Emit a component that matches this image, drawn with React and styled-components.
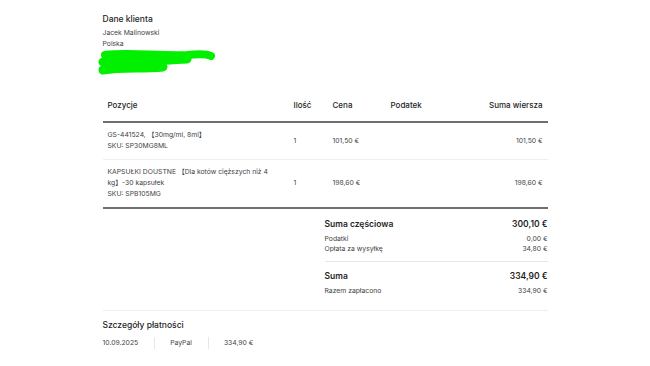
import styled, { createGlobalStyle } from "styled-components";

const Global = createGlobalStyle`
  body {
    margin: 0;
    background: #fff;
    font-family: Inter, "Noto Sans", "Noto Sans CJK SC", sans-serif;
    color: #333;
  }
`;

const Page = styled.div`
  width: 445px;
  margin: 0 auto;
  padding-top: 13px;
`;

const Title = styled.div`
  font-size: 8.5px;
  line-height: 12px;
  font-weight: 500;
  color: #1e1e1e;
  margin-bottom: ${(p) => p.gap || 3}px;
`;

const Line = styled.div`
  font-size: 6.8px;
  line-height: 11px;
  color: #444;
`;

const Scribble = styled.svg`
  display: block;
  margin-left: -6px;
  width: 120px;
  height: 28px;
`;

const Table = styled.div`
  margin-top: 14px;
`;

const Row = styled.div`
  display: grid;
  grid-template-columns: 186px 39px 58px 1fr 1fr;
  align-items: center;
  border-bottom: ${(p) => p.border};
`;

const Cell = styled.div`
  padding: ${(p) => (p.head ? "9px 5px 10px" : "6px 5px 8px")};
  font-size: ${(p) => (p.head ? "8px" : "6.8px")};
  line-height: 11px;
  font-weight: ${(p) => (p.head ? 500 : 400)};
  color: ${(p) => (p.head ? "#1e1e1e" : "#444")};
  text-align: ${(p) => (p.right ? "right" : "left")};
`;

const Totals = styled.div`
  margin-left: 222px;
  padding-top: 9px;
  padding-bottom: 14px;
`;

const TotalGroup = styled.div`
  padding-bottom: ${(p) => (p.first ? 7 : 0)}px;
  border-bottom: ${(p) => (p.first ? "1px solid #dfe7ef" : "none")};
  margin-bottom: ${(p) => (p.first ? 8 : 0)}px;
`;

const TotalRow = styled.div`
  display: flex;
  justify-content: space-between;
  font-size: ${(p) => (p.strong ? "8.5px" : "6.8px")};
  line-height: ${(p) => (p.strong ? "13px" : "10px")};
  font-weight: ${(p) => (p.strong ? 600 : 400)};
  color: ${(p) => (p.strong ? "#1e1e1e" : "#444")};
  margin-bottom: ${(p) => (p.strong ? 3 : 0)}px;
`;

const Payment = styled.div`
  border-top: 1px solid #eceff1;
  padding-top: 8px;
`;

const PayRow = styled.div`
  display: flex;
  align-items: center;
  margin-top: 6px;
`;

const PayItem = styled.div`
  font-size: 6.8px;
  line-height: 12px;
  color: #444;
  padding: 0 ${(p) => (p.last ? 0 : 16)}px 0 ${(p) => (p.first ? 0 : 15)}px;
  border-right: ${(p) => (p.last ? "none" : "1px solid #e4e7ea")};
`;

const items = [
  {
    name: ["GS-441524, 【30mg/ml, 8ml】", "SKU: SP30MG8ML"],
    qty: 1,
    price: "101,50 €",
    total: "101,50 €",
  },
  {
    name: [
      "KAPSUŁKI DOUSTNE 【Dla kotów cięższych niż 4 kg】-30 kapsułek",
      "SKU: SPB105MG",
    ],
    qty: 1,
    price: "198,60 €",
    total: "198,60 €",
  },
];

export default function App() {
  return (
    <>
      <Global />
      <Page>
        <Title gap={2}>Dane klienta</Title>
        <Line>Jacek Malinowski</Line>
        <Line>Polska</Line>
        <Scribble viewBox="0 0 120 28">
          <path
            d="M8 6 C30 3 60 7 90 6 C100 5 110 5 114 7"
            stroke="#00f000"
            strokeWidth="8"
            strokeLinecap="round"
            fill="none"
          />
          <path
            d="M6 13 C30 12 60 12 90 10 M6 21 C25 18 45 20 66 18"
            stroke="#00f000"
            strokeWidth="9"
            strokeLinecap="round"
            fill="none"
          />
        </Scribble>

        <Table>
          <Row border="2px solid #6f6f6f">
            <Cell head>Pozycje</Cell>
            <Cell head>Ilość</Cell>
            <Cell head>Cena</Cell>
            <Cell head>Podatek</Cell>
            <Cell head right>
              Suma wiersza
            </Cell>
          </Row>
          {items.map((it, i) => (
            <Row
              key={i}
              border={
                i === items.length - 1 ? "2px solid #6f6f6f" : "1px solid #eeeff0"
              }
            >
              <Cell>
                {it.name.map((n) => (
                  <div key={n}>{n}</div>
                ))}
              </Cell>
              <Cell>{it.qty}</Cell>
              <Cell>{it.price}</Cell>
              <Cell />
              <Cell right>{it.total}</Cell>
            </Row>
          ))}
        </Table>

        <Totals>
          <TotalGroup first>
            <TotalRow strong>
              <span>Suma częściowa</span>
              <span>300,10 €</span>
            </TotalRow>
            <TotalRow>
              <span>Podatki</span>
              <span>0,00 €</span>
            </TotalRow>
            <TotalRow>
              <span>Opłata za wysyłkę</span>
              <span>34,80 €</span>
            </TotalRow>
          </TotalGroup>
          <TotalGroup>
            <TotalRow strong>
              <span>Suma</span>
              <span>334,90 €</span>
            </TotalRow>
            <TotalRow>
              <span>Razem zapłacono</span>
              <span>334,90 €</span>
            </TotalRow>
          </TotalGroup>
        </Totals>

        <Payment>
          <Title gap={0}>Szczegóły płatności</Title>
          <PayRow>
            <PayItem first>10.09.2025</PayItem>
            <PayItem>PayPal</PayItem>
            <PayItem last>334,90 €</PayItem>
          </PayRow>
        </Payment>
      </Page>
    </>
  );
}
